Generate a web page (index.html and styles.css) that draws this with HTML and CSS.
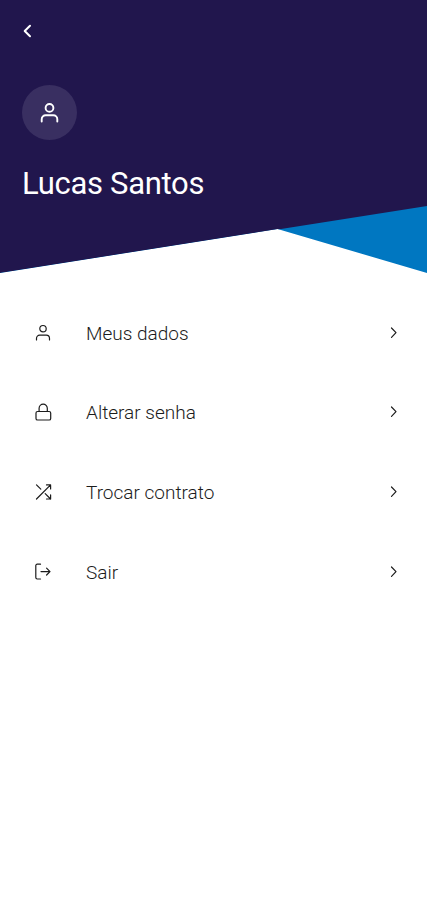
FILE: index.html
```html
<!DOCTYPE html>
<html lang="pt-BR">
<head>
    <meta charset="UTF-8">
    <meta name="viewport" content="width=device-width, initial-scale=1.0">
    <title>Perfil</title>
    <link rel="stylesheet" href="styles.css">
</head>
<body>
    <header class="header">
        <div class="header-content">
            <button class="back-button" aria-label="Voltar">
                <svg width="12" height="16" viewBox="0 0 12 16"><path d="M8 2.7 2.7 8 8 13.3"/></svg>
            </button>
            <div class="avatar">
                <svg width="24" height="24" viewBox="0 0 24 24">
                    <circle cx="11.5" cy="6.9" r="3.9"/>
                    <path d="M3.7 20.5v-2.3a4 4 0 0 1 4-4h7.6a4 4 0 0 1 4 4v2.3"/>
                </svg>
            </div>
            <h1>Lucas Santos</h1>
        </div>
    </header>

    <nav class="menu">
        <a class="menu-item" href="#">
            <svg class="icon" viewBox="0 0 20 20">
                <circle cx="10" cy="5.7" r="3.2"/>
                <path d="M3.5 17v-1.6a3.2 3.2 0 0 1 3.2-3.2h6.6a3.2 3.2 0 0 1 3.2 3.2V17"/>
            </svg>
            <span>Meus dados</span>
            <svg class="chevron" viewBox="0 0 10 14"><path d="m2.5 2 4.5 4.7-4.5 4.7"/></svg>
        </a>
        <a class="menu-item" href="#">
            <svg class="icon" viewBox="0 0 20 20">
                <rect x="3" y="9.5" width="14.7" height="8.5" rx="1.6"/>
                <path d="M6.1 9.5V6.3a4.1 4.1 0 0 1 8.2 0v3.2"/>
            </svg>
            <span>Alterar senha</span>
            <svg class="chevron" viewBox="0 0 10 14"><path d="m2.5 2 4.5 4.7-4.5 4.7"/></svg>
        </a>
        <a class="menu-item" href="#">
            <svg class="icon" viewBox="0 0 20 20">
                <path d="M13.5 2.9h4.1V7M3.5 17 17.6 2.9M17.6 12.9V17h-4.1M12.2 11.6l5.4 5.4M3.5 2.9l4.3 4.3"/>
            </svg>
            <span>Trocar contrato</span>
            <svg class="chevron" viewBox="0 0 10 14"><path d="m2.5 2 4.5 4.7-4.5 4.7"/></svg>
        </a>
        <a class="menu-item" href="#">
            <svg class="icon" viewBox="0 0 20 20">
                <path d="M7.5 2.2H4.2a1.4 1.4 0 0 0-1.4 1.4v12A1.4 1.4 0 0 0 4.2 17h3.3M8 9.6h9M13.6 6.2 17 9.6 13.6 13"/>
            </svg>
            <span>Sair</span>
            <svg class="chevron" viewBox="0 0 10 14"><path d="m2.5 2 4.5 4.7-4.5 4.7"/></svg>
        </a>
    </nav>
</body>
</html>
```
FILE: styles.css
```css
* {
    margin: 0;
    padding: 0;
    box-sizing: border-box;
    font-family: Roboto, sans-serif;
}

body {
    min-height: 100vh;
    background: #ffffff;
    color: #1c1c1c;
}

svg {
    display: block;
    flex: none;
    fill: none;
    stroke: currentColor;
    stroke-linecap: round;
    stroke-linejoin: round;
}

/* blue wedge sits behind the dark slanted panel */
.header {
    height: 273px;
    background: #0077c1;
    clip-path: polygon(0 0, 100% 0, 100% 100%, 65% 229px, 0 100%);
}

.header-content {
    height: 100%;
    padding: 23px 22px 0;
    background: #21164d;
    color: #ffffff;
    clip-path: polygon(0 0, 100% 0, 100% 206px, 0 100%);
}

.back-button {
    display: block;
    background: none;
    border: none;
    color: #ffffff;
    cursor: pointer;
}

.back-button svg {
    stroke-width: 2;
}

.avatar {
    width: 55px;
    height: 55px;
    margin-top: 46px;
    border-radius: 50%;
    background: #392f61;
    display: flex;
    align-items: center;
    justify-content: center;
}

.avatar svg {
    stroke-width: 1.9;
}

h1 {
    margin-top: 26px;
    font-size: 31px;
    font-weight: 400;
    line-height: 36px;
    letter-spacing: -0.3px;
}

.menu {
    padding: 20px 28px 0 33px;
}

.menu-item {
    height: 79.6px;
    display: flex;
    align-items: center;
    color: #1c1c1c;
    font-size: 19px;
    font-weight: 300;
    text-decoration: none;
}

.menu-item span {
    flex: 1;
    margin-left: 33px;
    padding-top: 1px;
}

.icon {
    width: 20px;
    height: 20px;
    stroke-width: 1.2;
}

.chevron {
    width: 10px;
    height: 14px;
    stroke-width: 1.2;
}
```
